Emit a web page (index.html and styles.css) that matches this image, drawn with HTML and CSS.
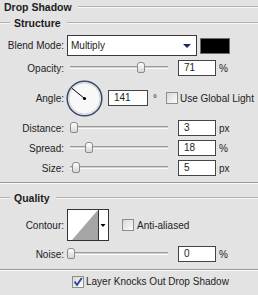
FILE: index.html
```html
<html>

<head>
	<title>Drop Shadow</title>
	<link rel="stylesheet" href="styles.css">
</head>
<body>
	<div class="panel">
		<div class="heading">Drop Shadow</div>
		<div class="group">Structure</div>

		<div class="row blend">
			<span class="label">Blend Mode:</span>
			<div class="controls">
				<div class="select">Multiply<span class="arrow"></span></div>
				<div class="swatch"></div>
			</div>
		</div>

		<div class="row">
			<span class="label">Opacity:</span>
			<div class="controls">
				<div class="slider"><div class="track"></div><span class="thumb" style="--v:71"></span></div>
				<div class="field">71</div>
				<span class="unit">%</span>
			</div>
		</div>

		<div class="row angle">
			<span class="label">Angle:</span>
			<div class="controls">
				<svg class="dial" width="37" height="37" viewBox="0 0 37 37">
					<circle cx="18.5" cy="18.5" r="17.3" fill="#f8f8f8" stroke="#3e4b66" stroke-width="1.6"/>
					<circle cx="18.5" cy="18.5" r="15.6" fill="none" stroke="#cdd1da" stroke-width="1"/>
					<line x1="18.5" y1="18.5" x2="5.8" y2="8.2" stroke="#000" stroke-width="1"/>
					<circle cx="18.5" cy="18.5" r="1.6" fill="#000"/>
				</svg>
				<div class="field wide">141</div>
				<span class="deg">°</span>
				<span class="check"></span>
				<span class="check-label">Use Global Light</span>
			</div>
		</div>

		<div class="row">
			<span class="label">Distance:</span>
			<div class="controls">
				<div class="slider"><div class="track"></div><span class="thumb" style="--v:3"></span></div>
				<div class="field">3</div>
				<span class="unit">px</span>
			</div>
		</div>

		<div class="row">
			<span class="label">Spread:</span>
			<div class="controls">
				<div class="slider"><div class="track"></div><span class="thumb" style="--v:18"></span></div>
				<div class="field">18</div>
				<span class="unit">%</span>
			</div>
		</div>

		<div class="row">
			<span class="label">Size:</span>
			<div class="controls">
				<div class="slider"><div class="track"></div><span class="thumb" style="--v:5"></span></div>
				<div class="field">5</div>
				<span class="unit">px</span>
			</div>
		</div>

		<div class="rule"></div>
		<div class="group quality">Quality</div>

		<div class="row contour">
			<span class="label">Contour:</span>
			<div class="controls">
				<svg width="42" height="32" viewBox="0 0 42 32">
					<rect x="0.5" y="0.5" width="41" height="31" fill="#fff" stroke="#333"/>
					<polygon points="5,31 30,2 31,2 31,31" fill="#a5a5a5"/>
					<line x1="31.5" y1="1" x2="31.5" y2="31" stroke="#333"/>
					<polygon points="33.5,15 38.5,15 36,18" fill="#000"/>
				</svg>
				<span class="check anti"></span>
				<span class="check-label aa">Anti-aliased</span>
			</div>
		</div>

		<div class="row noise">
			<span class="label">Noise:</span>
			<div class="controls">
				<div class="slider"><div class="track"></div><span class="thumb" style="--v:0"></span></div>
				<div class="field">0</div>
				<span class="unit">%</span>
			</div>
		</div>

		<div class="rule lower"></div>

		<div class="knockout">
			<span class="check">
				<svg width="10" height="10" viewBox="0 0 10 10"><polyline points="1.5,4.5 4,8 8.8,1" fill="none" stroke="#24479c" stroke-width="1.8"/></svg>
			</span>
			<span class="check-label">Layer Knocks Out Drop Shadow</span>
		</div>
	</div>
</body>
</html>
```

FILE: styles.css
```css
*{
	box-sizing: border-box;
}

body{
	margin: 0;
	background-color: #e3e3e3;
	font-family: "Liberation Sans", Arial, sans-serif;
	font-size: 10px;
	color: #222;
}

.panel{
	width: 258px;
	height: 295px;
	overflow: hidden;
}

/* section titles with etched lines */
.heading, .group{
	display: flex;
	align-items: center;
	height: 14px;
	font-weight: bold;
	font-size: 10.5px;
	color: #1c1c1c;
}

.heading{
	padding-left: 4px;
}

.heading::after, .group::after, .group::before{
	content: "";
	border-top: 1px solid #b2b2b2;
	border-bottom: 1px solid #f7f7f7;
}

.heading::after, .group::after{
	flex: 1;
	margin-left: 6px;
}

.group{
	margin-top: 2px;
}

.group::before{
	width: 10px;
	margin-right: 4px;
}

.quality{
	margin-top: 7px;
}

.rule{
	margin-top: 5px;
	border-top: 1px solid #9a9a9a;
	border-bottom: 1px solid #fbfbfb;
}

.rule.lower{
	margin-top: 6px;
}

/* rows */
.row{
	display: grid;
	grid-template-columns: 64px auto;
	column-gap: 3px;
	align-items: center;
	height: 18px;
	margin-top: 2px;
}

.label{
	text-align: right;
}

.controls{
	display: flex;
	align-items: center;
}

.blend{
	height: 23px;
	margin-top: 4px;
}

.select{
	display: flex;
	align-items: center;
	justify-content: space-between;
	width: 130px;
	height: 21px;
	padding: 0 5px 0 3px;
	border: 1px solid #3a3a3a;
	background: #fff;
}

.arrow{
	width: 0;
	height: 0;
	border-left: 4px solid transparent;
	border-right: 4px solid transparent;
	border-top: 4px solid #1d2660;
}

.swatch{
	width: 30px;
	height: 16px;
	margin-left: 3px;
	background: #000;
	border: 1px solid #6c6c6c;
}

/* sliders */
.slider{
	position: relative;
	width: 104px;
	height: 12px;
}

.track{
	margin: 4px 3px 0;
	height: 3px;
	border-top: 1px solid #9c9c9c;
	border-bottom: 1px solid #fbfbfb;
	background: #cfcfcf;
}

.thumb{
	position: absolute;
	top: 0;
	left: calc(var(--v) * 0.98px);
	width: 8px;
	height: 11px;
	border: 1px solid #8a8a8a;
	border-radius: 3px 3px 2px 2px;
	background: linear-gradient(#ffffff, #d6d6d6);
}

.field{
	width: 38px;
	height: 16px;
	margin-left: 7px;
	padding-left: 5px;
	line-height: 14px;
	border: 1px solid #444;
	background: #fff;
}

.unit{
	margin-left: 3px;
}

/* angle */
.angle{
	height: 38px;
}

.dial{
	margin-left: -1px;
}

.field.wide{
	width: 40px;
	margin-left: 5px;
}

.deg{
	margin-left: 5px;
}

.check{
	display: flex;
	align-items: center;
	justify-content: center;
	width: 12px;
	height: 12px;
	margin-left: 9px;
	border: 1px solid #8e8e8e;
	background: linear-gradient(135deg, #d8d8d4, #fdfdfd);
}

.check-label{
	margin-left: 2px;
}

/* quality */
.contour{
	height: 34px;
	margin-top: 3px;
}

.check.anti{
	margin-left: 13px;
}

.check-label.aa{
	margin-left: 3px;
}

.noise{
	margin-top: 3px;
}

.knockout{
	display: flex;
	align-items: center;
	height: 15px;
	margin-top: 3px;
	padding-left: 72px;
}

.knockout .check{
	margin-left: 0;
}
```
